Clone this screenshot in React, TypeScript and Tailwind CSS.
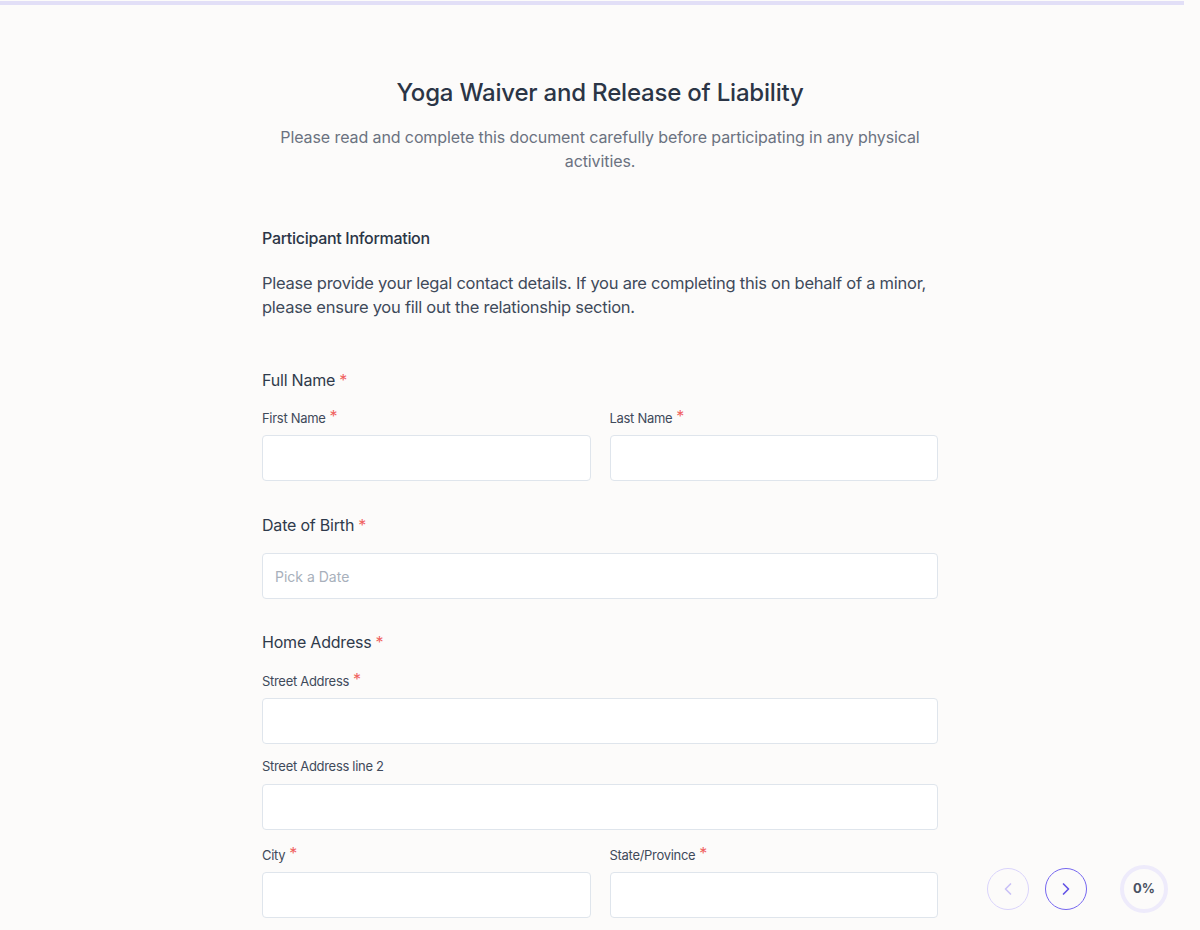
import { ChevronLeft, ChevronRight } from "lucide-react"

function Req({ big }: { big?: boolean }) {
  return (
    <span className={big ? "ml-1 text-[#f0625f]" : "ml-1 align-[1px] text-[16px] leading-none text-[#f0625f]"}>*</span>
  )
}

function Field({ label, required }: { label: string; required?: boolean }) {
  return (
    <div className="flex flex-col">
      <label className="block h-[18px] text-[13px] leading-[18px] tracking-[-0.3px] text-[#3f4a5a]">
        {label}
        {required && <Req />}
      </label>
      <input
        type="text"
        className="mt-[9px] h-[46px] w-full rounded-[4px] border border-[#dfe5ec] bg-white px-3 text-sm outline-none"
      />
    </div>
  )
}

function GroupTitle({ children }: { children: string }) {
  return (
    <h3 className="text-[16px] leading-6 tracking-[-0.2px] text-[#2f3a4b]">
      {children}
      <Req big />
    </h3>
  )
}

export default function App() {
  return (
    <div className="min-h-[930px] bg-[#fcfbfa] font-['Inter',sans-serif]">
      <div className="pt-px">
        <div className="h-1 w-[1184px] bg-[#e2dff7]" />
      </div>

      <main className="mx-auto w-[676px] pt-[72px]">
        <header className="flex flex-col items-center text-center">
          <h1 className="text-[24px] font-medium leading-8 tracking-[-0.2px] text-[#2b3546]">
            Yoga Waiver and Release of Liability
          </h1>
          <p className="mt-4 max-w-[660px] text-[16px] leading-6 tracking-[-0.1px] text-[#6b7280]">
            Please read and complete this document carefully before participating in any physical activities.
          </p>
        </header>

        <section className="mt-[53px]">
          <h2 className="text-[16px] font-medium leading-6 tracking-[-0.3px] text-[#2b3546]">Participant Information</h2>
          <p className="mt-[21px] text-[16.5px] leading-6 tracking-[-0.25px] text-[#3f4a5a]">
            Please provide your legal contact details. If you are completing this on behalf of a minor, please ensure you fill out the relationship section.
          </p>

          <div className="mt-[49px]">
            <GroupTitle>Full Name</GroupTitle>
            <div className="mt-[16px] grid grid-cols-2 gap-[19px]">
              <Field label="First Name" required />
              <Field label="Last Name" required />
            </div>
          </div>

          <div className="mt-[32px]">
            <GroupTitle>Date of Birth</GroupTitle>
            <input
              type="text"
              placeholder="Pick a Date"
              className="mt-4 h-[46px] w-full rounded-[4px] border border-[#dfe5ec] bg-white px-3 text-[14px] text-[#3f4a5a] outline-none placeholder:text-[#a8b0bb]"
            />
          </div>

          <div className="mt-[31px]">
            <GroupTitle>Home Address</GroupTitle>
            <div className="mt-[17px] flex flex-col gap-[13px]">
              <Field label="Street Address" required />
              <Field label="Street Address line 2" />
              <div className="mt-[2px] grid grid-cols-2 gap-[19px]">
                <Field label="City" required />
                <Field label="State/Province" required />
              </div>
            </div>
          </div>
        </section>
      </main>

      {/* pager + progress, pinned bottom right */}
      <div className="fixed left-[987px] top-[865px] flex items-center">
        <button className="flex h-[42px] w-[42px] items-center justify-center rounded-full border border-[#d9d3fb] text-[#c9c1f7]">
          <ChevronLeft size={20} strokeWidth={2} />
        </button>
        <button className="ml-4 flex h-[42px] w-[42px] items-center justify-center rounded-full border border-[#7566ef] text-[#6353e6]">
          <ChevronRight size={20} strokeWidth={2} />
        </button>
        <div className="ml-[33px] flex h-[48px] w-[48px] items-center justify-center rounded-full border-4 border-[#eeebfb] bg-[#fcfbfa] text-[13px] font-bold text-[#4a5262]">
          0%
        </div>
      </div>
    </div>
  )
}
